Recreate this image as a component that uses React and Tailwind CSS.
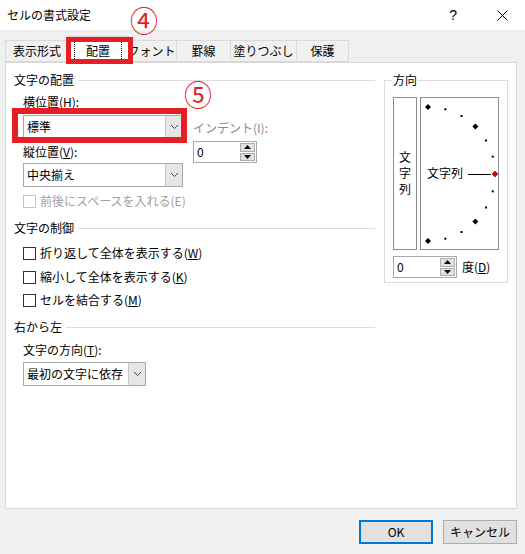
import React from "react";

const RED = "border-[#e61e26]";

function Chevron() {
  return (
    <svg width="9" height="6" viewBox="0 0 9 6">
      <polyline points="1,1 4.5,4.5 8,1" fill="none" stroke="#444" strokeWidth="1" />
    </svg>
  );
}

function Select({ value, width }) {
  return (
    <div className={`flex h-[24px] ${width} border border-[#a9a9a9] bg-white`}>
      <div className="flex-1 pl-[3px] flex items-center">{value}</div>
      <div className="w-[17px] flex items-center justify-center bg-[#e6e6e6] border-l border-[#c8c8c8]">
        <Chevron />
      </div>
    </div>
  );
}

function Spin({ value }) {
  return (
    <div className="flex h-[22px] w-[64px] border border-[#a9a9a9] bg-white">
      <div className="flex-1 pl-[3px] flex items-center">{value}</div>
      <div className="w-[17px] flex flex-col p-px gap-px">
        <div className="flex-1 flex items-center justify-center bg-[#e1e1e1] border border-[#adadad]">
          <svg width="7" height="4" viewBox="0 0 7 4"><polygon points="0,4 3.5,0 7,4" fill="#000" /></svg>
        </div>
        <div className="flex-1 flex items-center justify-center bg-[#e1e1e1] border border-[#adadad]">
          <svg width="7" height="4" viewBox="0 0 7 4"><polygon points="0,0 3.5,4 7,0" fill="#000" /></svg>
        </div>
      </div>
    </div>
  );
}

function GroupHeader({ label }) {
  return (
    <div className="flex items-center h-[16px]">
      <span className="pr-[4px]">{label}</span>
      <div className="flex-1 border-t border-[#dcdcdc]" />
    </div>
  );
}

function Check({ children, disabled, className }) {
  return (
    <div className={`flex items-center h-[16px] ml-[9px] ${className}`}>
      <div className={`w-[13px] h-[13px] bg-white border ${disabled ? "border-[#c4c4c4]" : "border-[#333]"}`} />
      <span className={`ml-[4px] ${disabled ? "text-[#a0a0a0]" : ""}`}>{children}</span>
    </div>
  );
}

const Tab = ({ label, w, selected }) =>
  selected ? (
    <div className={`relative z-10 -mb-px h-[27px] ${w} -mx-[2px] bg-white border border-b-0 border-[#d9d9d9] flex items-start justify-center pt-[4px]`}>
      <div className="px-[11px] py-px border border-dotted border-black">{label}</div>
    </div>
  ) : (
    <div className={`h-[22px] ${w} bg-[#f0f0f0] border border-[#d9d9d9] -ml-px flex items-center justify-center`}>
      {label}
    </div>
  );

function Arc() {
  const cx = 7;
  const cy = 76;
  const r = 67;
  const pts = [];
  for (let a = 90; a >= -90; a -= 15) {
    const rad = (a * Math.PI) / 180;
    pts.push({ a, x: cx + r * Math.cos(rad), y: cy - r * Math.sin(rad) });
  }
  return (
    <svg width="79" height="153" viewBox="0 0 79 153" className="absolute left-0 top-0">
      {pts.map((p) =>
        p.a % 45 === 0 ? (
          <polygon
            key={p.a}
            points={`${p.x},${p.y - 3} ${p.x + 3},${p.y} ${p.x},${p.y + 3} ${p.x - 3},${p.y}`}
            fill={p.a === 0 ? "#e00000" : "#000"}
            stroke={p.a === 0 ? "#600" : "none"}
            strokeWidth="0.5"
          />
        ) : (
          <rect key={p.a} x={p.x - 1} y={p.y - 1} width="2" height="2" fill="#000" />
        )
      )}
      <line x1="47" y1="76.5" x2="70" y2="76.5" stroke="#000" strokeWidth="1" />
    </svg>
  );
}

export default function App() {
  return (
    <div className="relative w-[525px] h-[554px] overflow-hidden bg-[#f0f0f0] text-[12px] leading-[16px] text-black font-['Noto_Sans_CJK_JP','Noto_Sans',sans-serif]">
      {/* title bar */}
      <div className="h-[30px] bg-white flex items-center">
        <span className="ml-[7px]">セルの書式設定</span>
        <span className="ml-auto mr-[40px] text-[14px] font-['Liberation_Sans',sans-serif]">?</span>
        <svg width="11" height="11" viewBox="0 0 11 11" className="mr-[17px]">
          <path d="M0.5 0.5 L10.5 10.5 M10.5 0.5 L0.5 10.5" stroke="#000" strokeWidth="1" />
        </svg>
      </div>

      {/* tabs */}
      <div className="flex items-end h-[32px] pl-[6px]">
        <Tab label="表示形式" w="w-[64px]" />
        <Tab label="配置" w="w-[62px]" selected />
        <Tab label="フォント" w="w-[51px]" />
        <Tab label="罫線" w="w-[55px]" />
        <Tab label="塗りつぶし" w="w-[67px]" />
        <Tab label="保護" w="w-[53px]" />
      </div>

      {/* panel */}
      <div className="ml-[5px] w-[512px] h-[447px] bg-white border border-[#d9d9d9] pl-[8px] pt-[9px] flex gap-[9px]">
        <div className="w-[361px] flex flex-col">
          <GroupHeader label="文字の配置" />
          <div className="flex mt-[6px]">
            <div className="ml-[9px] w-[160px] flex flex-col">
              <div>横位置(<span className="underline">H</span>):</div>
              <div className="mt-[5px]"><Select value="標準" width="w-[160px]" /></div>
              <div className="mt-[5px]">縦位置(<span className="underline">V</span>):</div>
              <div className="mt-[3px]"><Select value="中央揃え" width="w-[160px]" /></div>
            </div>
            <div className="ml-[10px] flex flex-col pt-[26px]">
              <div className="text-[#8a8a8a]">インデント(I):</div>
              <div className="mt-[5px]"><Spin value="0" /></div>
            </div>
          </div>
          <Check disabled className="mt-[6px]">前後にスペースを入れる(E)</Check>
          <div className="mt-[11px]"><GroupHeader label="文字の制御" /></div>
          <Check className="mt-[9px]">折り返して全体を表示する(<span className="underline">W</span>)</Check>
          <Check className="mt-[8px]">縮小して全体を表示する(<span className="underline">K</span>)</Check>
          <Check className="mt-[7px]">セルを結合する(<span className="underline">M</span>)</Check>
          <div className="mt-[11px]"><GroupHeader label="右から左" /></div>
          <div className="ml-[9px] mt-[7px]">文字の方向(<span className="underline">T</span>):</div>
          <div className="ml-[9px] mt-[4px]"><Select value="最初の文字に依存" width="w-[123px]" /></div>
        </div>

        {/* 方向 */}
        <div className="relative mt-[8px] w-[124px] h-[203px] border border-[#dcdcdc] pl-[8px] pt-[16px]">
          <span className="absolute -top-[9px] left-[7px] bg-white px-px">方向</span>
          <div className="flex gap-[3px]">
            <div className="w-[24px] h-[153px] border border-[#8c8c8c] flex flex-col items-center justify-center leading-[16px] pb-[2px]">
              <span>文</span>
              <span>字</span>
              <span>列</span>
            </div>
            <div className="relative w-[79px] h-[153px] border border-[#8c8c8c]">
              <Arc />
              <span className="absolute left-[6px] top-[67px]">文字列</span>
            </div>
          </div>
          <div className="flex items-center mt-[6px]">
            <Spin value="0" />
            <span className="ml-[5px]">度(<span className="underline">D</span>)</span>
          </div>
        </div>
      </div>

      {/* buttons */}
      <div className="flex justify-end gap-[10px] mt-[11px] pr-[8px]">
        <button className="w-[74px] h-[24px] bg-[#e1e1e1] border-2 border-[#0078d7]">OK</button>
        <button className="w-[74px] h-[24px] bg-[#e1e1e1] border border-[#adadad]">キャンセル</button>
      </div>

      {/* annotations */}
      <div className={`absolute z-20 left-[66px] top-[37px] w-[67px] h-[27px] border-[5px] ${RED}`} />
      <div className={`absolute z-20 left-[12px] top-[108px] w-[175px] h-[35px] border-[6px] ${RED}`} />
      <span className="absolute z-20 left-[130px] top-[3px] text-[28px] leading-[34px] text-[#e61e26]">④</span>
      <span className="absolute z-20 left-[184px] top-[77px] text-[28px] leading-[34px] text-[#e61e26]">⑤</span>
    </div>
  );
}
